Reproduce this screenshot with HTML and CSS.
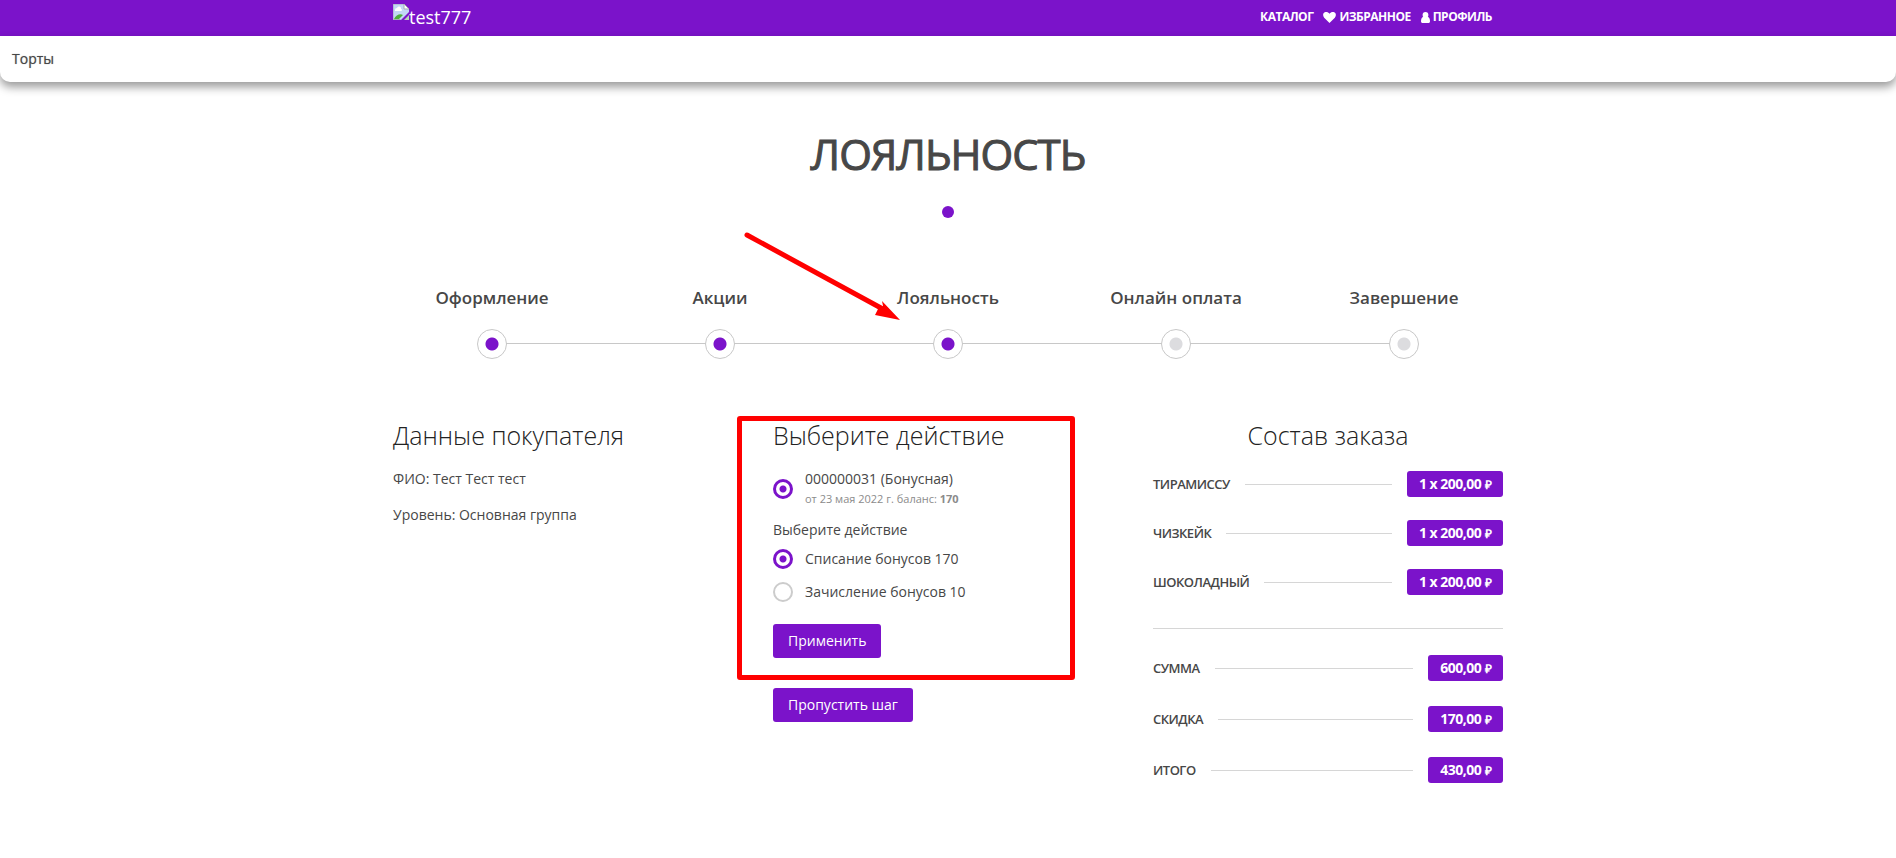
FILE: index.html
```html
<!DOCTYPE html>
<html lang="ru">
<head>
<meta charset="utf-8">
<meta name="viewport" content="width=device-width, initial-scale=1">
<title>Лояльность</title>
<link rel="stylesheet" href="styles.css">
</head>
<body>
<header class="topbar">
  <div class="container topbar-inner">
    <a class="brand" href="#">
      <svg class="brand-icon" width="16" height="16" viewBox="0 0 16 16" aria-hidden="true">
        <path d="M0 0h11l5 5v3L8 16H0z" fill="#c3d7f5"/>
        <path d="M0 16V0h11M.5 15.5h7" fill="none" stroke="#a6a9b5"/>
        <path d="M2 6a2 2 0 0 1 2-2 2 2 0 0 1 4 1 1 1 0 0 1 0 2H2z" fill="#fff"/>
        <path d="M1 15c2-4 6-6 9-4l-4 4z" fill="#4fae3c"/>
        <path d="M11 0v5h5z" fill="#fff" stroke="#a6a9b5"/>
        <path d="M16 11v5h-5z" fill="#b9d3b9"/>
      </svg><span>test777</span>
    </a>
    <nav class="topnav">
      <a href="#">КАТАЛОГ</a>
      <a href="#"><svg width="13" height="11" viewBox="0 0 14 12" aria-hidden="true"><path d="M7 12 1.200 6.200C-.6 4.200-.2 1.300 1.800.4 3.600-.4 5.700.2 7 2 8.300.2 10.400-.4 12.200.4c2 .9 2.400 3.800.6 5.800z" fill="currentColor"/></svg>ИЗБРАННОЕ</a>
      <a href="#"><svg width="9" height="11" viewBox="0 0 9 11" aria-hidden="true"><circle cx="4.500" cy="3" r="2.900" fill="currentColor"/><path d="M2 5C.7 5.400 0 7 0 9.200 0 10.400.7 11 1.600 11h5.800C8.300 11 9 10.400 9 9.200 9 7 8.300 5.400 7 5z" fill="currentColor"/></svg>ПРОФИЛЬ</a>
    </nav>
  </div>
</header>
<nav class="submenu"><a href="#">Торты</a></nav>

<main class="container">
  <div class="title">
    <h1>ЛОЯЛЬНОСТЬ</h1>
    <span class="dot"></span>
  </div>

  <ol class="steps">
    <li class="step done"><span>Оформление</span><i class="mark"></i></li>
    <li class="step done"><span>Акции</span><i class="mark"></i></li>
    <li class="step done"><span>Лояльность</span><i class="mark"></i>
      <svg class="arrow" width="156" height="90" viewBox="0 0 156 90" aria-hidden="true">
        <path d="M3 3 137 76" stroke="#f00" stroke-width="5" stroke-linecap="round"/>
        <path d="M156 88 138 69 139 74 134 77 131 83z" fill="#f00"/>
      </svg>
    </li>
    <li class="step"><span>Онлайн оплата</span><i class="mark"></i></li>
    <li class="step"><span>Завершение</span><i class="mark"></i></li>
  </ol>

  <div class="columns">
    <section class="column">
      <h2>Данные покупателя</h2>
      <p>ФИО: Тест Тест тест</p>
      <p>Уровень: Основная группа</p>
    </section>

    <section class="column">
      <form class="framed">
        <h2>Выберите действие</h2>
        <label class="option card-option"><input type="radio" name="card" checked>
          <span>000000031 (Бонусная)<small>от 23 мая 2022 г. баланс: <b>170</b></small></span></label>
        <div class="caption">Выберите действие</div>
        <label class="option"><input type="radio" name="action" checked><span>Списание бонусов 170</span></label>
        <label class="option"><input type="radio" name="action"><span>Зачисление бонусов 10</span></label>
        <button class="btn apply" type="button">Применить</button>
      </form>
      <button class="btn" type="button">Пропустить шаг</button>
    </section>

    <section class="column">
      <h2 class="centered">Состав заказа</h2>
      <ul class="order">
        <li><span>ТИРАМИССУ</span><i class="rule"></i><b class="price">1 x 200,00 <span class="rub">₽</span></b></li>
        <li><span>ЧИЗКЕЙК</span><i class="rule"></i><b class="price">1 x 200,00 <span class="rub">₽</span></b></li>
        <li><span>ШОКОЛАДНЫЙ</span><i class="rule"></i><b class="price">1 x 200,00 <span class="rub">₽</span></b></li>
      </ul>
      <ul class="order totals">
        <li><span>СУММА</span><i class="rule"></i><b class="price">600,00 <span class="rub">₽</span></b></li>
        <li><span>СКИДКА</span><i class="rule"></i><b class="price">170,00 <span class="rub">₽</span></b></li>
        <li><span>ИТОГО</span><i class="rule"></i><b class="price">430,00 <span class="rub">₽</span></b></li>
      </ul>
    </section>
  </div>
</main>
</body>
</html>
```
FILE: styles.css
```css
:root { --accent: #7b13ca; --text: #474747; --line: #c8c8c8; }
* { box-sizing: border-box; }
body {
  margin: 0;
  background: #fff;
  color: var(--text);
  font: 400 14px/20px "Open Sans", sans-serif;
}
a { color: inherit; text-decoration: none; }
h1, h2, p, ul, ol { margin: 0; padding: 0; }
ul, ol { list-style: none; }
.container { max-width: 1140px; margin: 0 auto; padding: 0 15px; }

.topbar { background: var(--accent); color: #fff; }
.topbar-inner { display: flex; justify-content: space-between; height: 36px; }
.brand { display: flex; font-size: 18px; font-weight: 400; line-height: 34px; }
.brand-icon { margin-top: 4px; }
.topnav { display: flex; gap: 10px; margin-right: 11px; font-size: 12px; font-weight: 700; line-height: 34px; letter-spacing: -0.5px; }
.topnav a { display: flex; align-items: center; gap: 3px; height: 34px; }

.submenu {
  height: 46px;
  padding: 13px 12px;
  border-radius: 0 0 10px 10px;
  box-shadow: 0 5px 10px rgba(0, 0, 0, .4);
  text-shadow: 0 0 1px #999;
}

.title { display: flex; flex-direction: column; align-items: center; padding-top: 42px; }
h1 { font-size: 42px; font-weight: 400; line-height: 60px; letter-spacing: -1px; -webkit-text-stroke: 1px currentColor; }
.dot { width: 12px; height: 12px; margin-top: 22px; border-radius: 50%; background: var(--accent); }

.steps { display: grid; grid-template-columns: repeat(5, 1fr); margin: 67px -15px 0; }
.step { position: relative; display: flex; flex-direction: column; align-items: center; gap: 18px; font-size: 17px; font-weight: 600; line-height: 26px; }
.mark {
  z-index: 1;
  width: 30px;
  height: 30px;
  border: 1px solid var(--line);
  border-radius: 50%;
  background: radial-gradient(circle, #dcdcdf 0 6px, #fff 7px);
}
.done .mark { background: radial-gradient(circle, var(--accent) 0 6px, #fff 7px); }
.step + .step::before { content: ""; position: absolute; right: 50%; bottom: 15px; width: 100%; height: 1px; background: var(--line); }
.arrow { position: absolute; right: calc(50% + 48px); bottom: 37px; fill: none; }

.columns { display: grid; grid-template-columns: repeat(3, 1fr); gap: 30px; margin-top: 59px; }
h2 { margin-bottom: 17px; color: #222; font-size: 25px; font-weight: 300; line-height: 34px; }
.centered { margin-bottom: 19px; text-align: center; }
.column p { margin-bottom: 16px; }

.framed { position: relative; }
.framed::after {
  content: "";
  position: absolute;
  inset: -2px 48px -22px -36px;
  border: 5px solid #f00;
  border-radius: 3px;
  pointer-events: none;
}
.option { display: flex; align-items: center; gap: 12px; margin-bottom: 13px; }
.option input {
  appearance: none;
  width: 20px;
  height: 20px;
  margin: 0;
  border: 2px solid #ccc;
  border-radius: 50%;
}
.option input:checked { border: 3px solid var(--accent); background: radial-gradient(circle, var(--accent) 0 3px, #fff 4px); }
.option small { display: block; color: #8b8b8b; font-size: 11px; }
.option b { font-weight: 700; }
.caption { margin-bottom: 9px; }
.card-option { margin-bottom: 11px; }
.btn {
  display: block;
  padding: 7px 15px;
  border: 0;
  border-radius: 3px;
  background: var(--accent);
  color: #fff;
  font: 400 14px/20px "Open Sans", sans-serif;
}
.apply { margin-top: 22px; }
.framed + .btn { margin-top: 30px; }

.order { display: grid; gap: 23px; }
.order li { display: flex; align-items: center; gap: 15px; font-size: 13px; font-weight: 600; letter-spacing: -0.5px; }
.rule { flex: 1; height: 1px; background: #d6d6d6; }
.price { padding: 3px 12px; border-radius: 3px; background: var(--accent); color: #fff; font-size: 14px; font-weight: 700; }
.rub { font-family: "Liberation Serif", serif; font-size: 12px; line-height: 1; }
.totals { gap: 25px; margin-top: 33px; padding-top: 26px; border-top: 1px solid #d6d6d6; }
```
